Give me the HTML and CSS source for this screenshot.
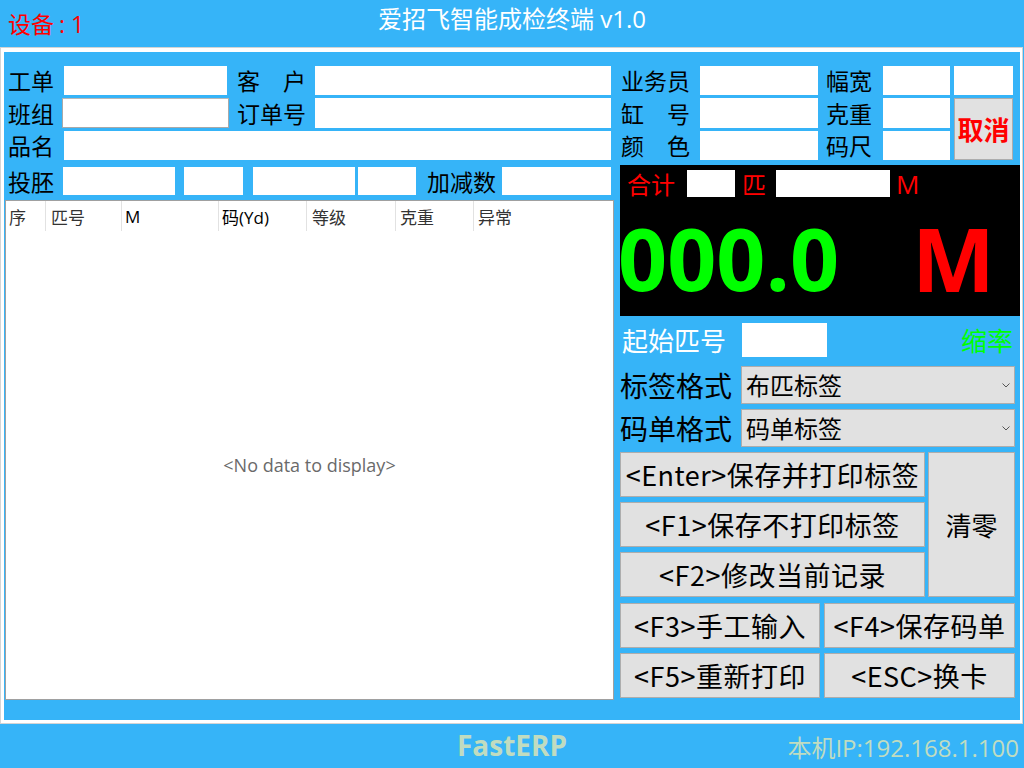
FILE: index.html
```html
<!DOCTYPE html>
<html lang="zh-CN">
<head>
<meta charset="utf-8">
<title>爱招飞智能成检终端</title>
<link rel="stylesheet" href="styles.css">
</head>
<body>
<div class="app">
  <header class="topbar">
    <span class="device">设备<span class="colon">:</span>1</span>
    <span class="title">爱招飞智能成检终端 v1.0</span>
    <span></span>
  </header>

  <div class="frame">
    <div class="frame-in">
      <section class="left">
        <div class="row h29">
          <span class="lbl lw56">工单</span><span class="inp w163"></span>
          <span class="lbl lw78 ml10">客　户</span><span class="inp w296"></span>
        </div>
        <div class="row h30 mt3">
          <span class="lbl lw54">班组</span><span class="inp w167 sunk"></span>
          <span class="lbl lw78 ml8">订单号</span><span class="inp w296"></span>
        </div>
        <div class="row h29 mt3">
          <span class="lbl lw56">品名</span><span class="inp w547"></span>
        </div>
        <div class="row h28 mt7">
          <span class="lbl lw55">投胚</span><span class="inp w112"></span>
          <span class="inp w59 ml9"></span>
          <span class="inp w102 ml10"></span>
          <span class="inp w58 ml3"></span>
          <span class="lbl lw75 ml11">加减数</span><span class="inp w109"></span>
        </div>
        <div class="grid">
          <div class="ghead">
            <span class="gc c1">序</span>
            <span class="gc c2">匹号</span>
            <span class="gc c3 lat">M</span>
            <span class="gc c4 lat">码(Yd)</span>
            <span class="gc c5">等级</span>
            <span class="gc c6">克重</span>
            <span class="gc c7">异常</span>
          </div>
          <div class="gbody">&lt;No data to display&gt;</div>
        </div>
      </section>

      <section class="right">
        <div class="rtop">
          <span class="rlbl">业务员</span><span class="inp"></span>
          <span class="rlbl pl8">幅宽</span><span class="inp"></span>
          <span class="inp c5n"></span>

          <span class="rlbl">缸　号</span><span class="inp"></span>
          <span class="rlbl pl8">克重</span><span class="inp"></span>
          <button class="btn cancel">取消</button>

          <span class="rlbl">颜　色</span><span class="inp"></span>
          <span class="rlbl pl8">码尺</span><span class="inp"></span>
        </div>

        <div class="board">
          <div class="board-top">
            <span class="red">合计</span><span class="wbox bw48"></span>
            <span class="red ml7">匹</span><span class="wbox bw114"></span>
            <span class="red lat ml6">M</span>
          </div>
          <div class="board-big">
            <span class="bignum">000.0</span>
            <span class="bigm">M</span>
          </div>
        </div>

        <div class="start-row">
          <span class="start-lbl">起始匹号</span><span class="inp sw85"></span>
          <span class="shrink">缩率</span>
        </div>

        <div class="sel-row mt9">
          <span class="sel-lbl">标签格式</span>
          <div class="select"><span>布匹标签</span><svg class="chev" width="8" height="5" viewBox="0 0 8 5"><path d="M0.5 0.5 L4 4 L7.5 0.5" fill="none" stroke="#555" stroke-width="1"/></svg></div>
        </div>
        <div class="sel-row mt5">
          <span class="sel-lbl">码单格式</span>
          <div class="select"><span>码单标签</span><svg class="chev" width="8" height="5" viewBox="0 0 8 5"><path d="M0.5 0.5 L4 4 L7.5 0.5" fill="none" stroke="#555" stroke-width="1"/></svg></div>
        </div>

        <div class="btns1">
          <button class="btn clear">清零</button>
          <button class="btn">&lt;Enter&gt;保存并打印标签</button>
          <button class="btn">&lt;F1&gt;保存不打印标签</button>
          <button class="btn">&lt;F2&gt;修改当前记录</button>
        </div>
        <div class="btns2">
          <button class="btn">&lt;F3&gt;手工输入</button>
          <button class="btn">&lt;F4&gt;保存码单</button>
          <button class="btn">&lt;F5&gt;重新打印</button>
          <button class="btn">&lt;ESC&gt;换卡</button>
        </div>
      </section>
    </div>
  </div>

  <footer class="footer">
    <span></span>
    <span class="brand">FastERP</span>
    <span class="ip">本机IP:192.168.1.100</span>
  </footer>
</div>
</body>
</html>
```

FILE: styles.css
```css
* { box-sizing: border-box; }
html, body { margin: 0; padding: 0; }
body {
  width: 1024px;
  height: 768px;
  overflow: hidden;
  background: #36b4f8;
  font-family: "Noto Sans CJK SC", sans-serif;
  color: #000;
}
.app { width: 1024px; height: 768px; display: flex; flex-direction: column; }

/* top bar */
.topbar {
  height: 47px;
  flex: none;
  display: grid;
  grid-template-columns: 1fr auto 1fr;
  align-items: start;
}
.device {
  padding: 11px 0 0 8px;
  font-size: 23px;
  line-height: 26px;
  color: #ff0000;
  font-family: "Open Sans", "Noto Sans CJK SC", sans-serif;
  white-space: nowrap;
}
.colon { margin: 0 6px 0 5px; }
.title {
  padding-top: 6px;
  font-size: 24px;
  line-height: 26px;
  color: #fff;
  font-family: "Open Sans", "Noto Sans CJK SC", sans-serif;
  white-space: nowrap;
}

/* frame */
.frame {
  width: 1023px;
  height: 677px;
  flex: none;
  border: 1px solid #d4d4d4;
}
.frame-in {
  height: 100%;
  border-style: solid;
  border-color: #fff;
  border-width: 4px 2px 3px 3px;
  padding-left: 1px;
  display: flex;
  gap: 6px;
}

/* left */
.left { width: 609px; flex: none; padding-top: 14px; display: flex; flex-direction: column; }
.row { display: flex; align-items: center; padding-left: 3px; flex: none; }
.h28 { height: 28px; } .h29 { height: 29px; } .h30 { height: 30px; }
.mt3 { margin-top: 3px; } .mt5 { margin-top: 5px; } .mt7 { margin-top: 7px; } .mt9 { margin-top: 9px; }
.ml3 { margin-left: 3px; } .ml6 { margin-left: 6px; } .ml7 { margin-left: 7px; } .ml8 { margin-left: 8px; }
.ml9 { margin-left: 9px; } .ml10 { margin-left: 10px; } .ml11 { margin-left: 11px; }

.lbl { flex: none; font-size: 23px; line-height: 1; white-space: nowrap; color: #000; }
.lw54 { width: 54px; } .lw55 { width: 55px; } .lw56 { width: 56px; } .lw75 { width: 75px; } .lw78 { width: 78px; }

.inp { display: block; background: #fff; height: 100%; flex: none; }
.w58 { width: 58px; } .w59 { width: 59px; } .w102 { width: 102px; } .w109 { width: 109px; }
.w112 { width: 112px; } .w163 { width: 163px; } .w167 { width: 167px; } .w296 { width: 296px; } .w547 { width: 547px; }
.sunk { border: 1px solid #a9a9a9; border-top-color: #b8b8b8; }

.grid {
  margin-top: 5px;
  height: 500px;
  flex: none;
  background: #fff;
  border: 1px solid #a0a0a0;
  display: flex;
  flex-direction: column;
}
.ghead { height: 30px; display: flex; flex: none; }
.gc {
  flex: none;
  height: 100%;
  border-right: 1px solid #e2e2e2;
  display: flex;
  align-items: center;
  padding-left: 3px;
  font-size: 17px;
  color: #333;
  white-space: nowrap;
}
.gc.lat { font-family: "Open Sans", "Noto Sans CJK SC", sans-serif; color: #000; font-size: 17px; }
.c1 { width: 40px; } .c2 { width: 76px; padding-left: 5px; } .c3 { width: 97px; } .c4 { width: 88px; }
.c5 { width: 89px; padding-left: 5px; } .c6 { width: 78px; padding-left: 4px; } .c7 { flex: 1; border-right: none; padding-left: 4px; }
.gbody {
  flex: 1;
  display: flex;
  align-items: center;
  justify-content: center;
  font-family: "Open Sans", sans-serif;
  font-size: 18px;
  color: #6a6a6a;
}

/* right */
.right { width: 400px; flex: none; padding-top: 14px; display: flex; flex-direction: column; }
.rtop {
  display: grid;
  grid-template-columns: 80px 118px 65px 67px 63px;
  grid-template-rows: 29px 30px 29px;
  row-gap: 3px;
  flex: none;
}
.rlbl { font-size: 23px; line-height: 1; display: flex; align-items: center; padding-left: 1px; white-space: nowrap; }
.pl8 { padding-left: 8px; }
.c5n { width: 59px; justify-self: end; }
.btn {
  font-family: "Noto Sans CJK SC", sans-serif;
  background: #e1e1e1;
  border: 1px solid #adadad;
  color: #000;
  font-size: 27px;
  letter-spacing: 0.5px;
  line-height: 1;
  padding: 0;
  margin: 0;
  display: flex;
  align-items: center;
  justify-content: center;
  white-space: nowrap;
  border-radius: 0;
}
.cancel {
  grid-column: 5;
  grid-row: 2 / span 2;
  width: 59px;
  justify-self: end;
  color: #ff0000;
  font-weight: bold;
  font-size: 26px;
  letter-spacing: 0;
}
.clear { grid-column: 2; grid-row: 1 / span 3; font-size: 26px; letter-spacing: 0; }

.board {
  margin-top: 5px;
  height: 151px;
  flex: none;
  background: #000;
  display: flex;
  flex-direction: column;
}
.board-top { display: flex; align-items: center; height: 27px; margin-top: 5px; padding-left: 7px; }
.red { color: #ff0000; font-size: 24px; line-height: 1; }
.red.lat { font-family: "Open Sans", sans-serif; font-size: 26px; }
.wbox { display: block; height: 27px; background: #fff; }
.bw48 { width: 48px; margin-left: 12px; }
.bw114 { width: 114px; margin-left: 10px; }
.board-big { display: flex; margin-top: 18px; height: 86px; }
.bignum, .bigm {
  font-family: "Open Sans", sans-serif;
  font-weight: bold;
  font-size: 86px;
  line-height: 86px;
}
.bignum { color: #00ff00; width: 294px; margin-left: -2px; }
.bigm { color: #ff0000; font-size: 88px; }

.start-row { display: flex; align-items: center; height: 34px; margin-top: 7px; flex: none; }
.start-lbl { width: 122px; padding-left: 2px; color: #fff; font-size: 26px; line-height: 1; white-space: nowrap; }
.sw85 { width: 85px; }
.shrink { margin-left: auto; margin-right: 7px; color: #00ff00; font-size: 26px; line-height: 1; }

.sel-row { display: flex; align-items: center; height: 38px; flex: none; }
.sel-lbl { width: 121px; font-size: 28px; line-height: 1; white-space: nowrap; color: #000; }
.select {
  width: 274px;
  height: 38px;
  background: #e1e1e1;
  border: 1px solid #adadad;
  display: flex;
  align-items: center;
  padding-left: 4px;
  font-size: 24px;
  line-height: 1;
}
.select span { flex: 1; }
.chev { margin-right: 4px; flex: none; }

.btns1 {
  margin-top: 5px;
  display: grid;
  grid-template-columns: 305px 87px;
  grid-template-rows: 45px 45px 45px;
  column-gap: 3px;
  row-gap: 5px;
  flex: none;
}
.btns2 {
  margin-top: 6px;
  display: grid;
  grid-template-columns: 200px 191px;
  grid-template-rows: 45px 45px;
  column-gap: 4px;
  row-gap: 5px;
  flex: none;
}

/* footer */
.footer {
  flex: 1;
  display: grid;
  grid-template-columns: 1fr auto 1fr;
  align-items: center;
  color: #c0dcc0;
}
.brand { font-family: "Open Sans", sans-serif; font-weight: bold; font-size: 28px; line-height: 1; padding-bottom: 2px; }
.ip { justify-self: end; padding-right: 5px; padding-top: 4px; font-family: "Open Sans", "Noto Sans CJK SC", sans-serif; font-size: 24px; line-height: 1; white-space: nowrap; }
```
